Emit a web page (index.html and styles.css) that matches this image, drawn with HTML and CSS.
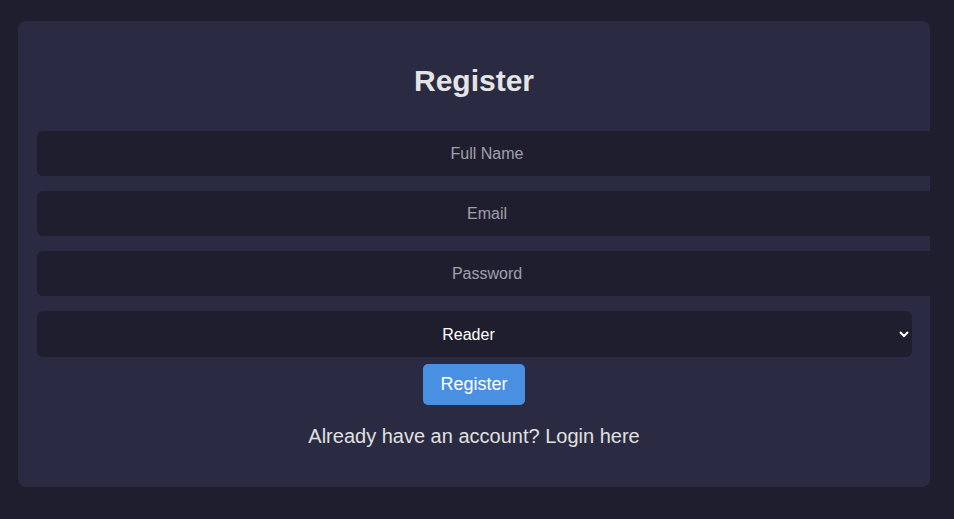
FILE: index.html
```html
<!DOCTYPE html>
<html lang="en">
<head>
<meta charset="utf-8">
<title>Register</title>
<link rel="stylesheet" href="styles.css">
</head>
<body>
  <div class="card">
    <h2 class="title">Register</h2>
    <form class="form">
      <input class="field" type="text" placeholder="Full Name">
      <input class="field" type="email" placeholder="Email">
      <input class="field" type="password" placeholder="Password">
      <select class="role">
        <option>Reader</option>
        <option>Author</option>
      </select>
      <button class="btn" type="button">Register</button>
    </form>
    <p class="note">Already have an account? <a class="link" href="#">Login here</a></p>
  </div>
</body>
</html>
```

FILE: styles.css
```css
html, body {
  margin: 0;
  padding: 0;
  background: #1f1e2e;
  font-family: "Liberation Sans", Arial, sans-serif;
  color: #e0e0e0;
}

body {
  padding: 21px 24px 32px 18px;
}

.card {
  background: #2a2a42;
  border-radius: 8px;
  padding: 19px;
  text-align: center;
}

.title {
  font-size: 30px;
  line-height: 34px;
  font-weight: bold;
  margin: 24px 0 33px;
  color: #e4e4e4;
}

.form {
  display: block;
}

.field {
  display: block;
  width: 100%;
  height: 19px;
  padding: 12px;
  margin: 0 0 15px;
  border: 1px solid #1f1e2e;
  border-radius: 6px;
  background: #1f1e2e;
  color: #e0e0e0;
  font-family: "Liberation Sans", Arial, sans-serif;
  font-size: 16px;
  line-height: 19px;
  text-align: center;
  outline: none;
}

.field::placeholder {
  color: #a0a0aa;
}

.role {
  display: block;
  width: 875px;
  height: 46px;
  margin: 0 0 7px;
  padding: 0 12px;
  border: none;
  border-radius: 6px;
  background-color: #1f1e2e;
  color: #ffffff;
  font-family: "Liberation Sans", Arial, sans-serif;
  font-size: 16px;
  text-align: center;
}

.btn {
  display: inline-block;
  height: 41px;
  padding: 0 17px;
  border: none;
  border-radius: 5px;
  background: #4a90e2;
  color: #ffffff;
  font-family: "Liberation Sans", Arial, sans-serif;
  font-size: 18px;
  cursor: pointer;
}

.note {
  font-size: 20px;
  margin: 20px 0 20px;
  color: #e0e0e0;
}

.link {
  color: #e0e0e0;
  text-decoration: none;
}
```
